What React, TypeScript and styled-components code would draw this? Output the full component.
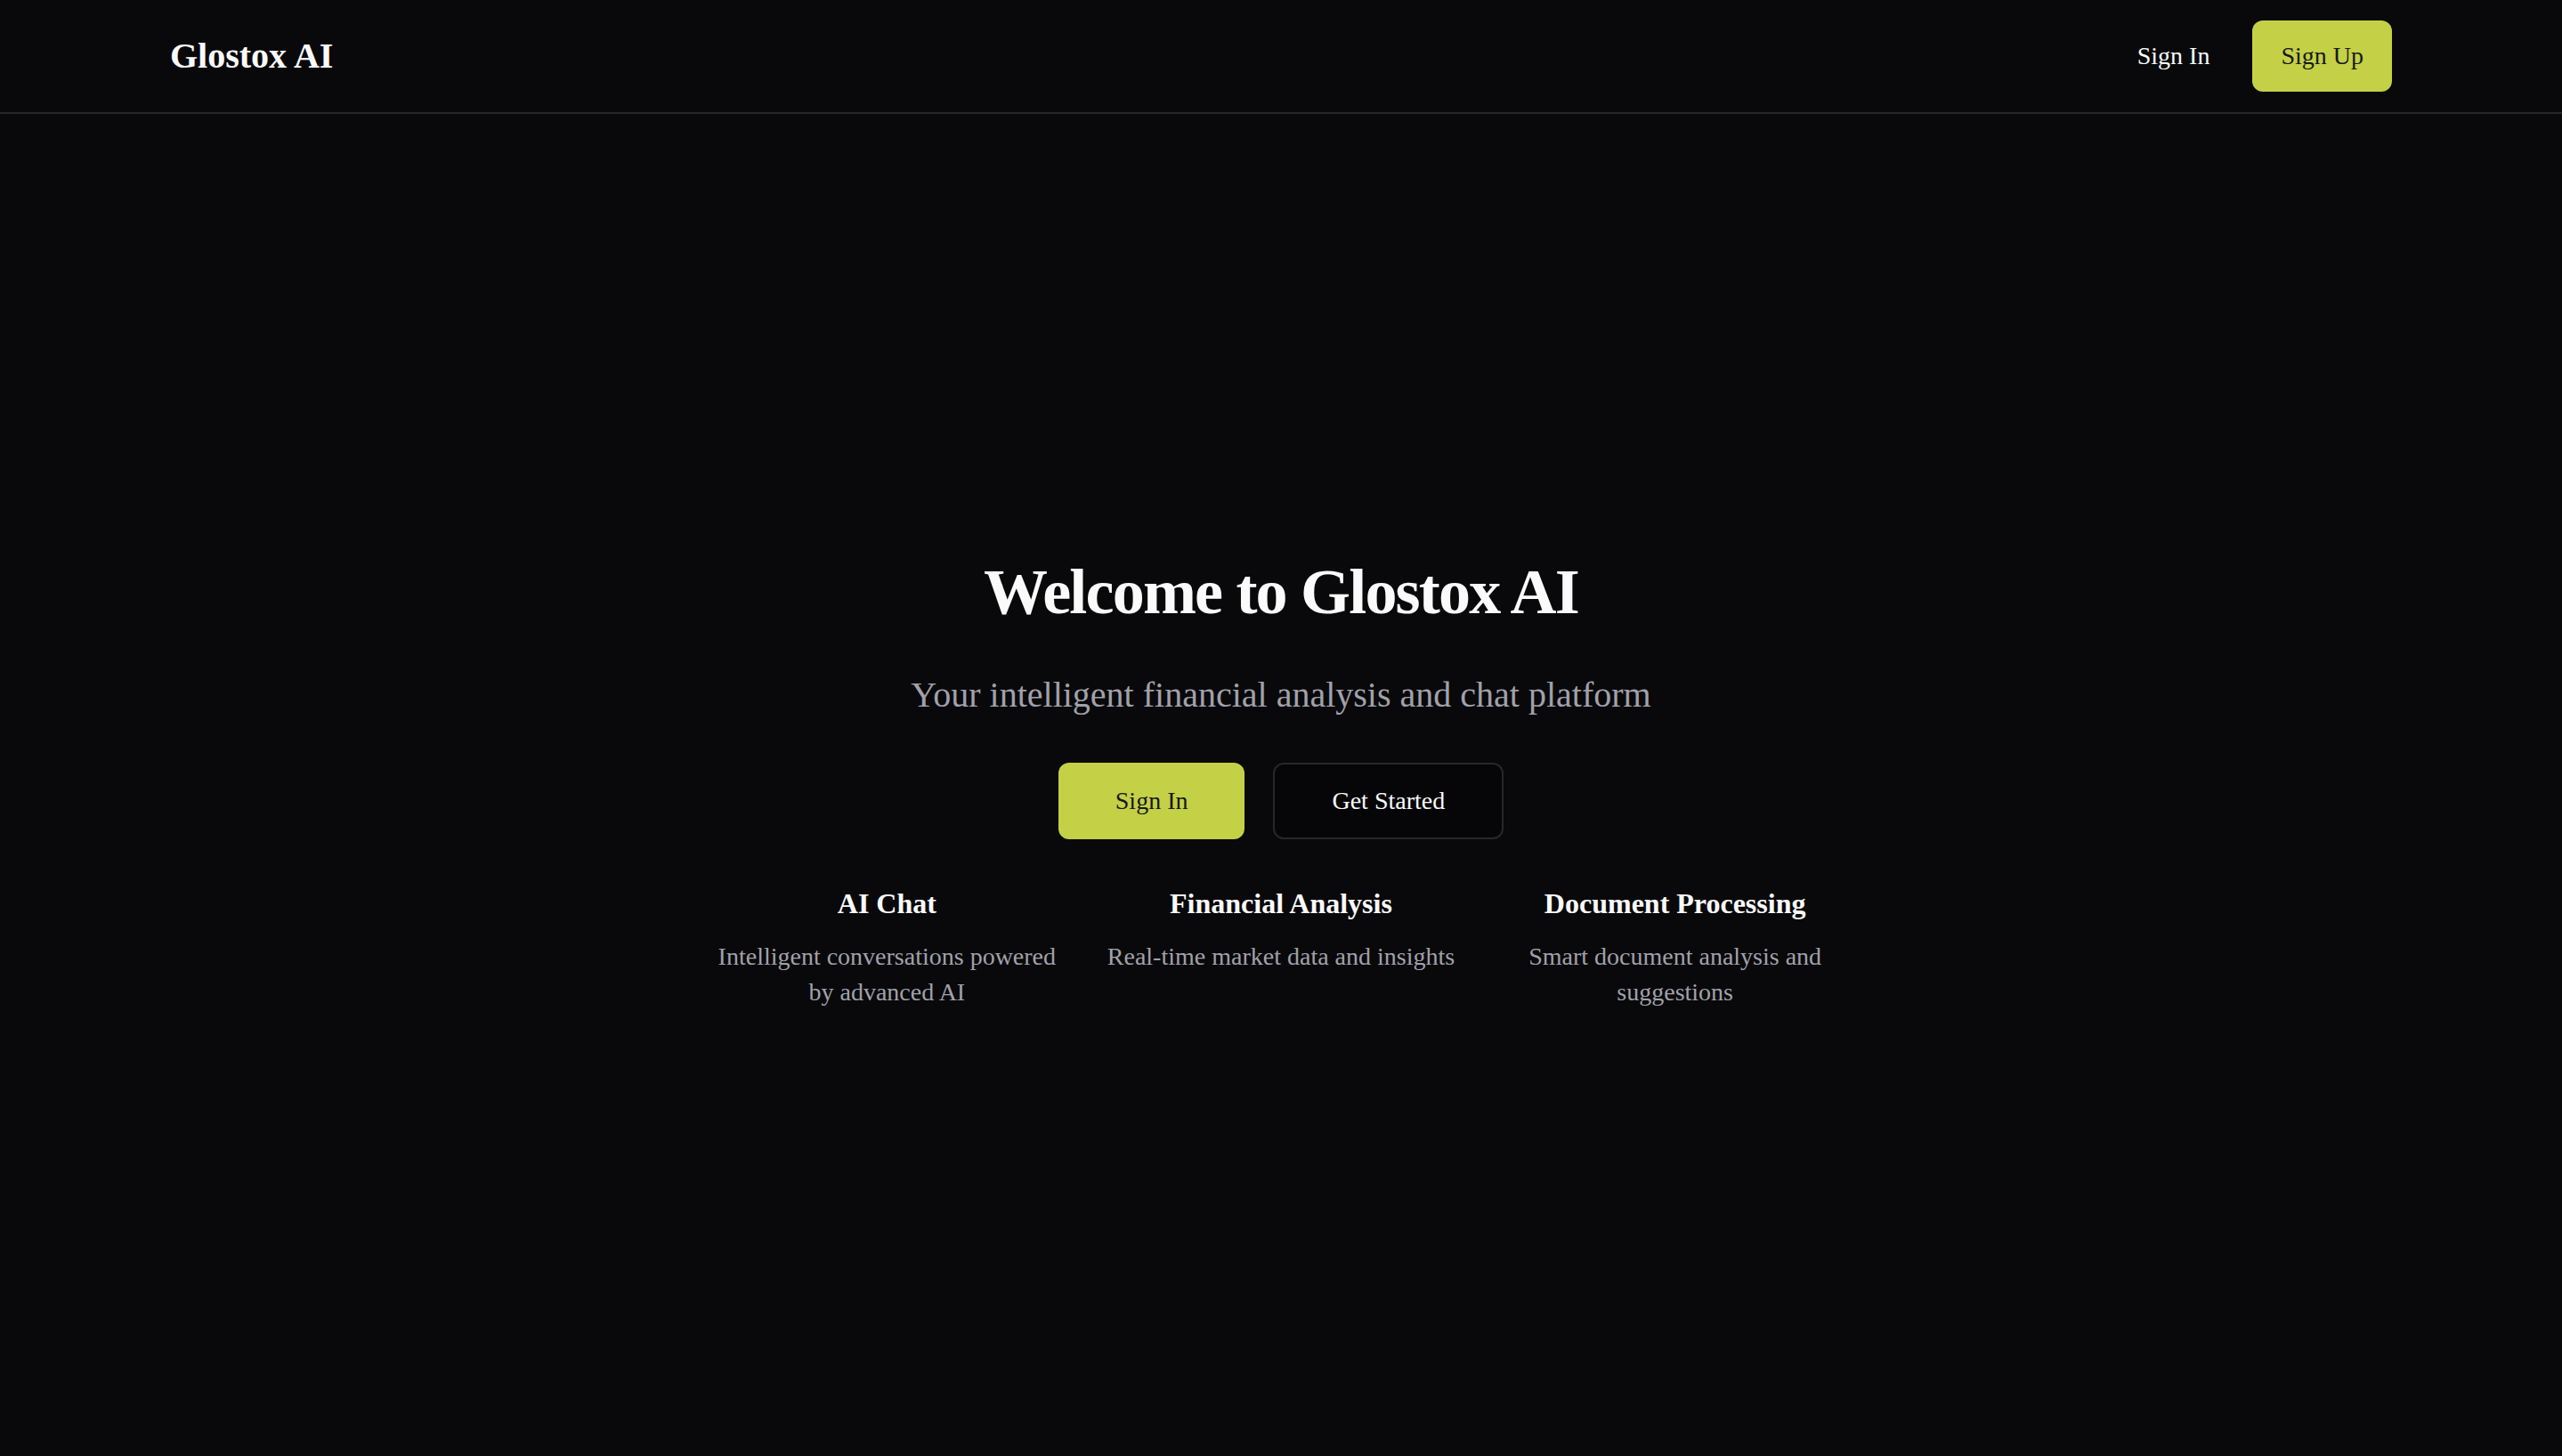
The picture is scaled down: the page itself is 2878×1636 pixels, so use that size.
import React from "react";
import styled, { createGlobalStyle } from "styled-components";

const GlobalStyle = createGlobalStyle`
  * { box-sizing: border-box; }
  html, body { margin: 0; padding: 0; background: #09090b; }
  body {
    font-family: "Liberation Serif", "Times New Roman", serif;
    color: #fafafa;
  }
`;

const Page = styled.div`
  min-height: 1636px;
  display: flex;
  flex-direction: column;
  background: #09090b;
`;

const Header = styled.header`
  height: 128px;
  border-bottom: 2px solid #27272a;
  display: flex;
  justify-content: center;
`;

const HeaderInner = styled.div`
  width: 100%;
  max-width: 2560px;
  padding: 0 32px;
  display: flex;
  align-items: center;
  justify-content: space-between;
`;

const Logo = styled.div`
  font-size: 40px;
  font-weight: 700;
  line-height: 56px;
  color: #fafafa;
`;

const Nav = styled.nav`
  display: flex;
  align-items: center;
  gap: 16px;
`;

const Button = styled.button<{ $variant: "primary" | "ghost" | "outline"; $size?: "md" | "lg" }>`
  font-family: "Liberation Serif", "Times New Roman", serif;
  font-size: 28px;
  line-height: 40px;
  height: ${(p) => (p.$size === "lg" ? "86px" : "80px")};
  padding: 0 ${(p) => (p.$size === "lg" ? "64px" : "32px")};
  border-radius: 12px;
  display: inline-flex;
  align-items: center;
  justify-content: center;
  cursor: pointer;
  border: ${(p) => (p.$variant === "outline" ? "2px solid #27272a" : "none")};
  background: ${(p) =>
    p.$variant === "primary" ? "#c4d046" : p.$variant === "outline" ? "#060608" : "transparent"};
  color: ${(p) => (p.$variant === "primary" ? "#18181b" : "#fafafa")};
`;

const Main = styled.main`
  flex: 1;
  display: flex;
  align-items: center;
  justify-content: center;
  padding-bottom: 4px;
`;

const Hero = styled.section`
  display: flex;
  flex-direction: column;
  align-items: center;
  gap: 48px;
  text-align: center;
`;

const Title = styled.h1`
  margin: 0;
  font-size: 72px;
  line-height: 80px;
  font-weight: 700;
  letter-spacing: -1.8px;
  color: #fafafa;
`;

const Subtitle = styled.p`
  margin: 0;
  font-size: 40px;
  line-height: 56px;
  color: #a1a1aa;
`;

const Actions = styled.div`
  display: flex;
  gap: 32px;
  justify-content: center;
`;

const Features = styled.div`
  width: 1280px;
  display: grid;
  grid-template-columns: repeat(3, 1fr);
  gap: 48px;
`;

const Feature = styled.div`
  display: flex;
  flex-direction: column;
  align-items: center;
  gap: 16px;
`;

const FeatureTitle = styled.h3`
  margin: 0;
  font-size: 32px;
  line-height: 48px;
  font-weight: 700;
  color: #fafafa;
`;

const FeatureText = styled.p`
  margin: 0;
  font-size: 28px;
  line-height: 40px;
  color: #a1a1aa;
`;

const features = [
  { title: "AI Chat", text: "Intelligent conversations powered by advanced AI" },
  { title: "Financial Analysis", text: "Real-time market data and insights" },
  { title: "Document Processing", text: "Smart document analysis and suggestions" },
];

export default function App() {
  return (
    <>
      <GlobalStyle />
      <Page>
        <Header>
          <HeaderInner>
            <Logo>Glostox AI</Logo>
            <Nav>
              <Button $variant="ghost">Sign In</Button>
              <Button $variant="primary">Sign Up</Button>
            </Nav>
          </HeaderInner>
        </Header>
        <Main>
          <Hero>
            <Title>Welcome to Glostox AI</Title>
            <Subtitle>Your intelligent financial analysis and chat platform</Subtitle>
            <Actions>
              <Button $variant="primary" $size="lg">Sign In</Button>
              <Button $variant="outline" $size="lg">Get Started</Button>
            </Actions>
            <Features>
              {features.map((f) => (
                <Feature key={f.title}>
                  <FeatureTitle>{f.title}</FeatureTitle>
                  <FeatureText>{f.text}</FeatureText>
                </Feature>
              ))}
            </Features>
          </Hero>
        </Main>
      </Page>
    </>
  );
}
